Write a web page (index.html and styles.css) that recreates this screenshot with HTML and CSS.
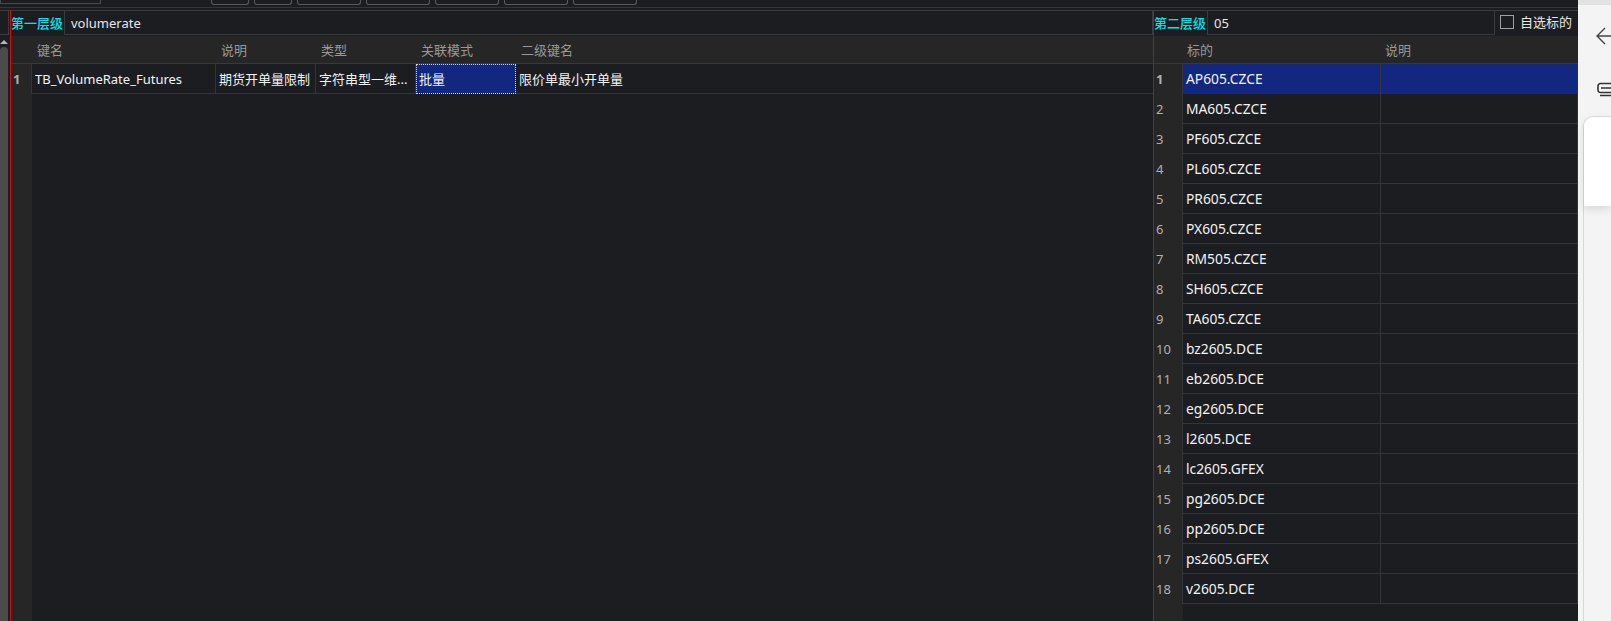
FILE: index.html
```html
<!DOCTYPE html>
<html lang="zh-CN">
<head>
<meta charset="utf-8">
<title>volumerate</title>
<link rel="stylesheet" href="styles.css">
</head>
<body>
<div class="app">
  <div class="dark">
    <div class="toolbar">
      <span class="tool-field"></span>
      <span class="tool-btn w38"></span>
      <span class="tool-btn w38"></span>
      <span class="tool-btn w64"></span>
      <span class="tool-btn w64"></span>
      <span class="tool-btn w64"></span>
      <span class="tool-btn w64"></span>
      <span class="tool-btn w64"></span>
    </div>
    <div class="content">
      <div class="rail">
        <div class="rail-box"></div>
        <div class="scroll-arrow"></div>
        <div class="scroll-thumb"></div>
      </div>
      <section class="panel left">
        <div class="filter">
          <label class="level">第一层级</label>
          <div class="input grow">volumerate</div>
        </div>
        <div class="grid-head lcols">
          <span></span><span>键名</span><span>说明</span><span>类型</span><span>关联模式</span><span>二级键名</span>
        </div>
        <div class="grid-body lbody">
          <div class="row lcols">
            <span class="num cur">1</span><span class="cell">TB_VolumeRate_Futures</span><span class="cell">期货开单量限制</span><span class="cell">字符串型一维...</span><span class="cell focus">批量</span><span class="cell last">限价单最小开单量</span>
          </div>
        </div>
      </section>
      <section class="panel right">
        <div class="filter">
          <label class="level">第二层级</label>
          <div class="input second">05</div>
          <span class="check"></span>
          <span class="check-label">自选标的</span>
        </div>
        <div class="grid-head rcols">
          <span></span><span>标的</span><span>说明</span>
        </div>
        <div class="grid-body rbody">
          <div class="row rcols sel"><span class="num cur">1</span><span class="cell">AP605.CZCE</span><span class="cell"></span></div>
          <div class="row rcols"><span class="num">2</span><span class="cell">MA605.CZCE</span><span class="cell"></span></div>
          <div class="row rcols"><span class="num">3</span><span class="cell">PF605.CZCE</span><span class="cell"></span></div>
          <div class="row rcols"><span class="num">4</span><span class="cell">PL605.CZCE</span><span class="cell"></span></div>
          <div class="row rcols"><span class="num">5</span><span class="cell">PR605.CZCE</span><span class="cell"></span></div>
          <div class="row rcols"><span class="num">6</span><span class="cell">PX605.CZCE</span><span class="cell"></span></div>
          <div class="row rcols"><span class="num">7</span><span class="cell">RM505.CZCE</span><span class="cell"></span></div>
          <div class="row rcols"><span class="num">8</span><span class="cell">SH605.CZCE</span><span class="cell"></span></div>
          <div class="row rcols"><span class="num">9</span><span class="cell">TA605.CZCE</span><span class="cell"></span></div>
          <div class="row rcols"><span class="num">10</span><span class="cell">bz2605.DCE</span><span class="cell"></span></div>
          <div class="row rcols"><span class="num">11</span><span class="cell">eb2605.DCE</span><span class="cell"></span></div>
          <div class="row rcols"><span class="num">12</span><span class="cell">eg2605.DCE</span><span class="cell"></span></div>
          <div class="row rcols"><span class="num">13</span><span class="cell">l2605.DCE</span><span class="cell"></span></div>
          <div class="row rcols"><span class="num">14</span><span class="cell">lc2605.GFEX</span><span class="cell"></span></div>
          <div class="row rcols"><span class="num">15</span><span class="cell">pg2605.DCE</span><span class="cell"></span></div>
          <div class="row rcols"><span class="num">16</span><span class="cell">pp2605.DCE</span><span class="cell"></span></div>
          <div class="row rcols"><span class="num">17</span><span class="cell">ps2605.GFEX</span><span class="cell"></span></div>
          <div class="row rcols"><span class="num">18</span><span class="cell">v2605.DCE</span><span class="cell"></span></div>
        </div>
      </section>
    </div>
  </div>
  <aside class="side">
    <svg class="back" width="15" height="20" viewBox="0 0 15 20" aria-hidden="true"><path d="M9 2 1 10l8 8M1 10h14" fill="none" stroke="#444" stroke-width="1.4"/></svg>
    <svg class="glyph" width="14" height="16" viewBox="0 0 14 16" aria-hidden="true"><path d="M14 1.5H3.5A2.5 2.5 0 0 0 1 4v4a2.5 2.5 0 0 0 2.5 2.5H14M4 6h10M3 13.5h11" fill="none" stroke="#333" stroke-width="1.6"/></svg>
    <div class="sheet">
      <div class="card"></div>
    </div>
  </aside>
</div>
</body>
</html>
```

FILE: styles.css
```css
* {
  box-sizing: border-box;
}

html,
body {
  margin: 0;
  height: 100%;
  overflow: hidden;
}

body {
  background: #1c1d21;
  color: #f2f2f2;
  font-family: "Noto Sans", "Noto Sans CJK SC", sans-serif;
  font-size: 13px;
}

.app {
  display: flex;
  height: 621px;
}

.dark {
  width: 1578px;
  display: flex;
  flex-direction: column;
  background: #1c1d21;
}

.toolbar {
  height: 8px;
  display: flex;
  align-items: flex-start;
  gap: 5px;
  border-bottom: 1px solid #343537;
  flex: none;
}

.tool-field {
  width: 101px;
  height: 4px;
  margin-right: 105px;
  border: 1px solid #4a4a4a;
  border-top: 0;
}

.tool-btn {
  height: 5px;
  border: 1px solid #5a5a5a;
  border-top: 0;
  border-radius: 0 0 3px 3px;
}

.w38 {
  width: 38px;
}

.w64 {
  width: 64px;
}

.content {
  flex: 1;
  min-height: 0;
  display: flex;
  margin-top: 2px;
  border-top: 1px solid #3a3b3d;
}

.rail {
  width: 10px;
  flex: none;
  display: flex;
  flex-direction: column;
  align-items: flex-start;
}

.rail-box {
  width: 9px;
  height: 25px;
  margin-top: -1px;
  border: 1px solid #3c3c3e;
  border-left: 0;
}

.scroll-arrow {
  width: 0;
  height: 0;
  margin: 5px 0 0 0;
  border-left: 4px solid transparent;
  border-right: 4px solid transparent;
  border-bottom: 4px solid #b5b5b5;
}

.scroll-thumb {
  width: 8px;
  flex: 1;
  margin-top: 3px;
  background: #4b4b4b;
  border-radius: 4px 4px 0 0;
}

.panel {
  display: flex;
  flex-direction: column;
  border-left: 1px solid #d40d12;
  min-height: 0;
  margin-top: -1px;
}

.left {
  width: 1143px;
}

.right {
  flex: 1;
  border-left-color: #a81317;
}

.filter {
  height: 26px;
  flex: none;
  display: flex;
  align-items: flex-start;
}

.level {
  width: 53px;
  flex: none;
  color: #00e5ee;
  font-size: 13px;
  font-weight: 500;
  line-height: 26px;
  white-space: nowrap;
}

.input {
  height: 25px;
  line-height: 24px;
  padding-left: 6px;
  border: 1px solid #3a3b3d;
  background: #1c1d21;
  color: #e6e6e6;
}

.grow {
  flex: 1;
}

.second {
  width: 288px;
  flex: none;
}

.check {
  width: 14px;
  height: 14px;
  margin: 5px 0 0 5px;
  flex: none;
  border: 1px solid #a0a0a0;
}

.check-label {
  margin-left: 6px;
  line-height: 25px;
  white-space: nowrap;
  color: #e6e6e6;
}

.grid-head {
  height: 28px;
  flex: none;
  background: #262626;
  border-bottom: 1px solid #38393b;
  color: #999;
  line-height: 29px;
}

.grid-head span {
  padding-left: 5px;
}

.rcols.grid-head span {
  padding-left: 4px;
}

.lcols {
  display: grid;
  grid-template-columns: 21px 184px 100px 100px 100px 1fr;
}

.rcols {
  display: grid;
  grid-template-columns: 29px 198px 197px;
}

.grid-body {
  flex: 1;
  min-height: 0;
  background-repeat: repeat-y;
}

.lbody {
  background-image: linear-gradient(#262626, #262626);
  background-size: 21px 100%;
}

.rbody {
  background-image: linear-gradient(#262626, #262626);
  background-size: 29px 100%;
}

.rbody .cell {
  font-size: 13.8px;
}

.row {
  height: 30px;
  border-bottom: 1px solid #343537;
  line-height: 30px;
}

.num {
  background: #262626;
  color: #b0b0b0;
  padding-left: 2px;
  border-right: 1px solid #343537;
}

.cur {
  font-weight: 700;
}

.cell {
  padding-left: 3px;
  border-right: 1px solid #343537;
  white-space: nowrap;
  overflow: hidden;
}

.cell.last {
  border-right: 0;
}

.sel .cell {
  background: #12277f;
}

.focus {
  background: #12277f;
  border: 1px dotted #e8d8a0;
  line-height: 28px;
  padding-left: 2px;
}

.side {
  flex: 1;
  background: #f4f4f4;
  border-top: 5px solid #e2e2e2;
  display: flex;
  flex-direction: column;
  overflow: hidden;
}

.back {
  margin: 21px 0 0 18px;
  flex: none;
}

.glyph {
  margin: 36px 0 0 19px;
  flex: none;
}

.sheet {
  flex: 1;
  margin: 18px 0 0 5px;
  background: #f4f4f4;
  border-left: 1px solid #d8d8d8;
  border-top: 1px solid #dcdcdc;
  border-top-left-radius: 10px;
}

.card {
  height: 89px;
  background: #fff;
  border-top-left-radius: 9px;
  box-shadow: 0 3px 8px rgba(0, 0, 0, .12);
}
```
